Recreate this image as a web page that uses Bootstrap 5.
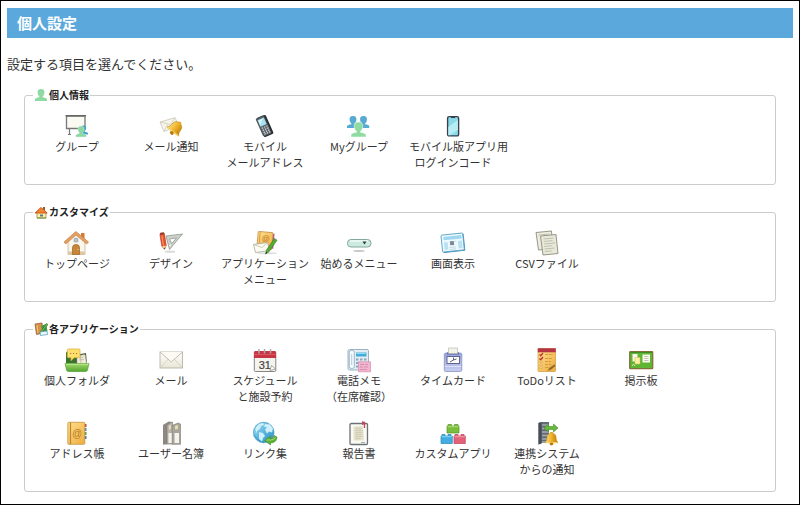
<!DOCTYPE html>
<html lang="ja">
<head>
<meta charset="utf-8">
<meta name="viewport" content="width=device-width, initial-scale=1">
<title>個人設定</title>
<link rel="stylesheet" href="https://cdn.jsdelivr.net/npm/bootstrap@5.3.0/dist/css/bootstrap.min.css">
<style>
body{font-family:"Noto Sans CJK JP","Noto Sans",sans-serif;color:#333;border:1px solid #000!important}
.page-title{background:#5ba9dc;font-size:15px;line-height:30px;padding:0 10px;margin:0 0 16px}
.page-pad{padding:7px 6px 12px}
.intro{font-size:13px;line-height:20px;margin:0 0 14px}
.group-box{border:1px solid #ccc;border-radius:3px;margin:0 17px 20px;padding:0 5px 14px}
.group-box legend{float:none;width:auto;font-size:10px;line-height:14px;font-weight:700;margin:0 0 12px 3px;padding:0 1px;gap:1px;color:#222}
.group-box legend svg{width:14px;height:14px}
.tile-list{row-gap:17px}
.tile{width:94px;min-height:56px;padding:0 3px;font-size:11px;line-height:16px;color:#333}
.tile:hover{text-decoration:underline!important}
.tile svg{width:24px;height:24px;overflow:visible}
</style>
<script src="https://cdn.jsdelivr.net/npm/bootstrap@5.3.0/dist/js/bootstrap.bundle.min.js"></script>
</head>
<body class="bg-white min-vh-100">
<svg width="0" height="0" class="position-absolute" aria-hidden="true">
<defs>
<linearGradient id="gold" x2="1"><stop stop-color="#ffe184"/><stop offset=".5" stop-color="#efb227"/><stop offset="1" stop-color="#b9780b"/></linearGradient>
<linearGradient id="green" x2="0" y2="1"><stop stop-color="#a5d86f"/><stop offset="1" stop-color="#52a52d"/></linearGradient>
<linearGradient id="sky" x2="1" y2="1"><stop stop-color="#9be0f6"/><stop offset="1" stop-color="#238cc4"/></linearGradient>
<linearGradient id="book" x2="1" y2="1"><stop stop-color="#ffe08e"/><stop offset="1" stop-color="#efac3d"/></linearGradient>
<linearGradient id="lilac" x2="0" y2="1"><stop stop-color="#97a4dc"/><stop offset="1" stop-color="#c6cdef"/></linearGradient>
<linearGradient id="paper" x2="0" y2="1"><stop stop-color="#fff"/><stop offset="1" stop-color="#e7e6d5"/></linearGradient>
<symbol id="bust" viewBox="0 0 12 12"><path d="M6 0C3.300 0 2.300 1.600 2.600 3.700c.1 1.800.8 3 1.800 3.700v.8C2.200 8.600.3 9 0 10.300V12h12v-1.700c-.3-1.300-2.200-1.700-4.400-2.100v-.8c1-.7 1.700-1.900 1.800-3.700C9.700 1.600 8.700 0 6 0z"/></symbol>
<symbol id="bell" viewBox="0 0 14 15"><path d="M7 0c1 0 1.400.7 1.400 1.400C11 2 12 4 12 7c0 2 .8 3 2 4.300H0C1.200 10 2 9 2 7c0-3 1-5 3.600-5.600C5.600.7 6 0 7 0z" fill="url(#gold)" stroke="#bd8514" stroke-width=".6"/><path d="M.6 11.500h12.800" stroke="#f7d671" stroke-width="1.500"/><ellipse cx="7" cy="13" rx="2" ry="1.600" fill="#b87b12"/></symbol>
<symbol id="house" viewBox="0 0 25 24"><path d="M17 2h3.500v7H17z" fill="#d17b38"/><path d="M4 10l8-8 9 8v13.500H4z" fill="#f9f6ec" stroke="#c8aa82" stroke-width=".7"/><path d="M4.400 20.500h16.200v3H4.400z" fill="#ddc69f"/><path d="M0 11L11.800.5 24.500 11l-1.800 2L12 4 1.800 13z" fill="#e6a05c" stroke="#c4834a" stroke-width=".7"/><circle cx="12" cy="9" r="2.600" fill="#8a98a5" stroke="#eee" stroke-width=".6"/><path d="M12 6.500v5M9.500 9h5" stroke="#fff" stroke-width=".5"/><path d="M8.500 23.500v-7q0-3 3.500-3t3.500 3v7z" fill="#c88638" stroke="#9c6427" stroke-width=".7"/><circle cx="14" cy="18.500" r=".6" fill="#ffe6a0"/></symbol>
</defs>
</svg>
<main class="page-pad">
<h1 class="page-title text-white fw-bold">個人設定</h1>
<p class="intro">設定する項目を選んでください。</p>

<fieldset class="group-box">
<legend class="d-flex align-items-center"><svg viewBox="0 0 14 14" fill="#8fdaa3" aria-hidden="true"><use href="#bust" x="1" y="1" width="12" height="12"/></svg>個人情報</legend>
<div class="tile-list d-flex flex-wrap">
<a href="#" class="tile d-flex flex-column align-items-center text-center text-nowrap text-decoration-none"><svg viewBox="0 0 24 24" aria-hidden="true"><path d="M1.500 2h18.500v12.500H1.500z" fill="#fafaf3" stroke="#777" stroke-width="1.300"/><path d="M.5 1.700H21" stroke="#666" stroke-width="1.300"/><path d="M4.500 15v5.500M3 20.500h3" stroke="#777" stroke-width="1.200"/><use href="#bust" x="14" y="11" width="9" height="10" fill="#429fca"/><use href="#bust" x="10.500" y="12" width="11" height="11" fill="#8bd7a1" stroke="#fff" stroke-width=".4"/></svg><span class="w-100">グループ</span></a>
<a href="#" class="tile d-flex flex-column align-items-center text-center text-nowrap text-decoration-none"><svg viewBox="0 0 24 24" aria-hidden="true"><path d="M1 8l15-4.300 4 8.500L5 17.500z" fill="#f7f5ea" stroke="#c9c7ba" stroke-width=".8"/><path d="M1 8l10.500 2.500L16 3.700M5 17.500l3.500-7M20 12.200l-7-2.500" fill="none" stroke="#d0cdbd" stroke-width=".8"/><use href="#bell" x="9" y="6" width="15" height="16" transform="rotate(38 16 14)"/></svg><span class="w-100">メール通知</span></a>
<a href="#" class="tile d-flex flex-column align-items-center text-center text-nowrap text-decoration-none"><svg viewBox="0 0 24 24" aria-hidden="true"><g transform="rotate(-24 11.500 12)"><rect x="7" y="2" width="10" height="20.500" rx="1.500" fill="#272b2e"/><rect x="6.500" y="2" width="8.800" height="19.500" rx="1.300" fill="#596066" stroke="#30363b" stroke-width=".6"/><rect x="7.500" y="4" width="6.800" height="7" fill="#a4e1f2"/><path d="M8 4.500h5l-5 5z" fill="#d8f4fa"/><path d="M8 13h1.500m1 0H12m1 0h1.500M8 15.300h1.500m1 0H12m1 0h1.500M8 17.500h1.500m1 0H12m1 0h1.500M8 19.500h1.500m1 0H12m1 0h1.500" stroke="#d8dde0" stroke-width="1.200"/></g></svg><span class="w-100">モバイル<br>メールアドレス</span></a>
<a href="#" class="tile d-flex flex-column align-items-center text-center text-nowrap text-decoration-none"><svg viewBox="0 0 24 24" aria-hidden="true"><g fill="#57abd2"><use href="#bust" x="0" y="2" width="12" height="12"/><use href="#bust" x="10.500" y="2" width="12" height="12"/></g><use href="#bust" x="4" y="8" width="15" height="15" fill="#8fdba2" stroke="#fff" stroke-width=".4"/></svg><span class="w-100">Myグループ</span></a>
<a href="#" class="tile d-flex flex-column align-items-center text-center text-nowrap text-decoration-none"><svg viewBox="0 0 24 24" aria-hidden="true"><rect x="6.600" y="2.600" width="11" height="19.300" rx="1.500" fill="#8bdaea" stroke="#39424c" stroke-width="1.400"/><path d="M7.300 13l9.600-7v10L9 21.200H7.300z" fill="#b7ecf4"/><path d="M10 3.300h4.200" stroke="#39424c" stroke-width="1.500"/></svg><span class="w-100">モバイル版アプリ用<br>ログインコード</span></a>
</div>
</fieldset>

<fieldset class="group-box">
<legend class="d-flex align-items-center"><svg viewBox="0 0 14 14" aria-hidden="true"><path d="M9 2h2v3H9z" fill="#9c592b"/><path d="M3 7h9v6H3z" fill="#fff0a5" stroke="#98743e" stroke-width=".7"/><path d="M1 8L7 2.500 13.200 8z" fill="#f38432" stroke="#c65b1b" stroke-width="1"/><path d="M6 9.500h3v2H6z" fill="#5b7994"/><path d="M3 13h9" stroke="#679b3d"/></svg>カスタマイズ</legend>
<div class="tile-list d-flex flex-wrap">
<a href="#" class="tile d-flex flex-column align-items-center text-center text-nowrap text-decoration-none"><svg viewBox="0 0 24 24" aria-hidden="true"><use href="#house" x="-1" y="0" width="25" height="24"/></svg><span class="w-100">トップページ</span></a>
<a href="#" class="tile d-flex flex-column align-items-center text-center text-nowrap text-decoration-none"><svg viewBox="0 0 24 24" aria-hidden="true"><ellipse cx="11" cy="20.700" rx="5.500" ry="1.200" fill="#ddd"/><path fill-rule="evenodd" d="M7 5l16.500-2L10.500 18.500zM10.500 8l2.200 4.500L17.500 7z" fill="#ccd2ca" stroke="#8f9892" stroke-width=".8"/><circle cx="11" cy="14.500" r=".8" fill="#fff"/><g transform="rotate(-9 4 10)"><path d="M2 3h4.500v12l-2.200 3.500L2 15z" fill="#e7522c" stroke="#ad3820" stroke-width=".6"/><path d="M3.700 4.500v10" stroke="#ff9b72"/><path d="M2 15h4.500l-2.200 3.500z" fill="#f5cf9b"/><path d="M3.600 17l.7 1.500.8-1.500z" fill="#333"/><rect x="2" y="1.500" width="4.500" height="2" rx=".8" fill="#943b29"/></g></svg><span class="w-100">デザイン</span></a>
<a href="#" class="tile d-flex flex-column align-items-center text-center text-nowrap text-decoration-none"><svg viewBox="0 0 24 24" aria-hidden="true"><ellipse cx="14" cy="22.300" rx="10" ry="1" fill="#ddd"/><g transform="rotate(5 12 9)"><path d="M19 2h2v15h-2z" fill="#b6589b"/><rect x="4.500" y="1" width="15" height="17" rx="1" fill="url(#book)" stroke="#bc853b" stroke-width=".7"/><path d="M6.500 1v17" stroke="#d79a44"/><text x="8.500" y="10" font-size="8" font-family="Liberation Sans, sans-serif" fill="#bd7c2a">@</text></g><path d="M.5 13.500l14-2 2 8-14 2z" fill="#fffdf1" stroke="#aaa797" stroke-width=".8"/><path d="M.5 13.500l8.500 3 5.500-5" fill="none" stroke="#c2bfad" stroke-width=".8"/><path d="M12.500 23l1-4 8-11.500 2.500 1.700-8 11.500z" fill="#57ac32" stroke="#2e762a" stroke-width=".6"/><path d="M12.500 23l.8-2 1 .8z" fill="#222"/></svg><span class="w-100">アプリケーション<br>メニュー</span></a>
<a href="#" class="tile d-flex flex-column align-items-center text-center text-nowrap text-decoration-none"><svg viewBox="0 0 24 24" aria-hidden="true"><ellipse cx="12" cy="20" rx="6" ry="1" fill="#c7c9c8"/><rect x=".5" y="8.500" width="23.500" height="7.500" rx="3.500" fill="#cceadf" stroke="#82a99b"/><path d="M3.500 10h17" stroke="#effaf6" stroke-width="1.500" stroke-linecap="round"/><path d="M15.500 10.500h4L17.500 13.500z" fill="#263d35"/></svg><span class="w-100">始めるメニュー</span></a>
<a href="#" class="tile d-flex flex-column align-items-center text-center text-nowrap text-decoration-none"><svg viewBox="0 0 24 24" aria-hidden="true"><g transform="rotate(-6 12 12)"><rect x="1.500" y="3.500" width="22" height="17.500" rx="1" fill="#3e91bd"/><rect x=".8" y="3" width="21.800" height="17" rx="1" fill="#eef9fd" stroke="#5ba4c8" stroke-width=".9"/><path d="M3 5h18v3.300H3z" fill="#9fd7f0"/><path d="M3 10.500h3.700v7.500H3zM17 10.500h4v7.500h-4z" fill="#b9e1f2"/><path d="M9 10h4v4H9z" fill="#79899a"/><path d="M8 16h6.500M8 18h6.500M14 10.500h1.500" stroke="#c1d8e2"/></g></svg><span class="w-100">画面表示</span></a>
<a href="#" class="tile d-flex flex-column align-items-center text-center text-nowrap text-decoration-none"><svg viewBox="0 0 24 24" aria-hidden="true"><g stroke="#8b8c7e" stroke-width=".9"><path d="M1 1.500L16.500 0l1.500 17.500L3.500 19z" fill="#ededdf"/><path d="M5.500 5L21 3.500l2 19L8 24z" fill="#e9e9da"/></g><path d="M8.500 8l10-1M8.700 10.500l9-.9M9 13l11-1.100M9.200 15.500l8-.8M9.500 18l10-1M9.700 20.500l7-.7M3.500 4l11-1" stroke="#bfc1ae"/></svg><span class="w-100">CSVファイル</span></a>
</div>
</fieldset>

<fieldset class="group-box mb-0">
<legend class="d-flex align-items-center"><svg viewBox="0 0 14 14" aria-hidden="true"><path d="M1 2l7-1 1 10-6.500 1.500z" fill="#d79049" stroke="#895423" stroke-width=".7"/><path d="M3 3l1 8" stroke="#f5c476"/><path d="M7 4l5-2 1.500 7-4 2z" fill="#42984b"/><path d="M12.500 1.500l1.500 1-6 8-2 1 .5-2z" fill="#67bd43" stroke="#286d31" stroke-width=".6"/><path d="M6 10l7-1 .5 3.500-7 1z" fill="#eefaff" stroke="#469ab5" stroke-width=".7"/></svg>各アプリケーション</legend>
<div class="tile-list d-flex flex-wrap">
<a href="#" class="tile d-flex flex-column align-items-center text-center text-nowrap text-decoration-none"><svg viewBox="0 0 24 24" aria-hidden="true"><path d="M1 5q0-1.500 1.500-1.500H11V16H1z" fill="#38762d"/><path d="M10 7l11-2 1 11H10z" fill="#435c38"/><path d="M12 8l8-1.500 1.500 9H12z" fill="#f0eddb" stroke="#aaa68f" stroke-width=".6"/><path d="M14 10l4.500-.7M14 12l5-.5M15.500 7l.5 9" stroke="#b5b196" stroke-width=".7"/><path d="M0 15.500h24L22.500 22q-.3 1.500-2 1.500h-17Q1.800 23.500 1.500 22z" fill="url(#green)" stroke="#479b2a" stroke-width=".6"/><path d="M.8 16.200h22.400" stroke="#c0eb92"/><path d="M3.500 1h10.300q1.200 0 1.200 1.200v6.300q0 1.200-1.200 1.200H9l-3 3V9.700H3.500q-1.200 0-1.200-1.200V2.200Q2.300 1 3.500 1z" fill="#ffdf6e" stroke="#dca633" stroke-width=".7"/><path d="M5 5.500h1.200m1.800 0h1.200m1.800 0h1.200" stroke="#a87a23" stroke-width="1.200"/></svg><span class="w-100">個人フォルダ</span></a>
<a href="#" class="tile d-flex flex-column align-items-center text-center text-nowrap text-decoration-none"><svg viewBox="0 0 24 24" aria-hidden="true"><rect x="1" y="4" width="22.500" height="16" fill="url(#paper)" stroke="#b7b3a4" stroke-width=".9"/><path d="M1 20l8.500-9M23.500 20L15 11" stroke="#cfccbc" stroke-width=".8"/><path d="M1 4l11.300 10L23.500 4" fill="#fbfaf4" stroke="#b9b5a5" stroke-width=".9"/></svg><span class="w-100">メール</span></a>
<a href="#" class="tile d-flex flex-column align-items-center text-center text-nowrap text-decoration-none"><svg viewBox="0 0 24 24" aria-hidden="true"><rect x="1.300" y="3.500" width="21.500" height="20" rx="1.200" fill="#f4f3ed" stroke="#7c7775" stroke-width=".9"/><path d="M1 10V4.500Q1 3 2.500 3h19Q23 3 23 4.500V10z" fill="#c83645"/><path d="M1 6.500h22" stroke="#d95661"/><path d="M6 1v4.500M11.500 1v4.500M17.500 1v4.500" stroke="#aaa" stroke-width="1.500"/><text x="5.700" y="20.500" font-size="11" font-family="Liberation Sans, sans-serif" fill="#444" stroke="#444" stroke-width=".2">31</text><path d="M17 22.500l1.500-5 4 3.500z" fill="#fff" stroke="#88857b" stroke-width=".7"/></svg><span class="w-100">スケジュール<br>と施設予約</span></a>
<a href="#" class="tile d-flex flex-column align-items-center text-center text-nowrap text-decoration-none"><svg viewBox="0 0 24 24" aria-hidden="true"><rect x="1" y="1.500" width="20.500" height="20.500" rx="1.500" fill="#e3edf3" stroke="#91aabd" stroke-width=".9"/><rect x="2.300" y="2.500" width="5" height="18" rx="2" fill="#f7fbfd" stroke="#92b1c5" stroke-width=".9"/><path d="M4.700 6v11" stroke="#b4cbd9"/><path d="M9 4.500h10.500v4H9z" fill="#42acd8"/><path d="M9.500 5.500h9" stroke="#9bddf3"/><g fill="#89a8ba"><path d="M9 10.500h2.500v2H9zM13 10.500h2.500v2H13zM17 10.500h2.500v2H17zM9 14h2.500v2H9zM13 14h2.500v2H13zM17 14h2.500v2H17zM9 17.500h2.500v2H9z"/></g><path d="M11.500 13.800h12v10h-12z" fill="#f0b5cf" stroke="#d88bad" stroke-width=".7"/><path d="M13 16.500h4m1 0h3M13 19h3m1 0h4M13 21.500h7" stroke="#d583a8" stroke-width=".8"/></svg><span class="w-100">電話メモ<br>（在席確認）</span></a>
<a href="#" class="tile d-flex flex-column align-items-center text-center text-nowrap text-decoration-none"><svg viewBox="0 0 24 24" aria-hidden="true"><rect x="3.300" y="5" width="17.500" height="18.500" rx="1.500" fill="url(#lilac)" stroke="#8994c4" stroke-width=".8"/><path d="M4 18.500h16" stroke="#dde2fa"/><path d="M6 4.500h12v2H6z" fill="#5b679c"/><path d="M7.500 0h9v5.500h-9z" fill="#f4f3e8" stroke="#b9b9b1" stroke-width=".7"/><rect x="6" y="8.500" width="12.500" height="7" fill="#fff" stroke="#5e668d" stroke-width="1"/><path d="M9 14l3.500-2V9.500m0 2.500l3-1" fill="none" stroke="#595f77"/></svg><span class="w-100">タイムカード</span></a>
<a href="#" class="tile d-flex flex-column align-items-center text-center text-nowrap text-decoration-none"><svg viewBox="0 0 24 24" aria-hidden="true"><rect x="3" y=".5" width="17.500" height="23" rx=".7" fill="url(#book)" stroke="#cf993d" stroke-width=".7"/><path d="M2.800.3h18v4h-18z" fill="#b63343"/><path d="M4.500 6.500l1.200 1.200L8 5M4.500 10.500l1.200 1.200L8 9" fill="none" stroke="#be303b" stroke-width="1.300"/><path d="M10 6.500h8M10 10.500h7M10 13.500h6M10 16.500h6M10 19.500h4" stroke="#cc9543" stroke-width=".9" stroke-dasharray="3 .7"/><path d="M5 13h2v1.500H5zM5 16h2v1.500H5zM5 19h2v1.500H5z" fill="#fff0be" stroke="#cc9543" stroke-width=".5"/><path d="M12 23l2.500-3.500 5-3.500.7 2-4 4z" fill="#b88635"/><path d="M14 21.500l6-4" stroke="#6b562d"/></svg><span class="w-100">ToDoリスト</span></a>
<a href="#" class="tile d-flex flex-column align-items-center text-center text-nowrap text-decoration-none"><svg viewBox="0 0 24 24" aria-hidden="true"><rect x=".7" y="3.700" width="23" height="17" rx=".8" fill="#60b632" stroke="#84713a" stroke-width="1.300"/><path d="M1.500 4.500h21.400" stroke="#3e8c24"/><path d="M3.500 6h5v7.500h-5z" fill="#f7f6e9"/><path d="M6 9.500h5V16H6z" fill="#fff0a2" stroke="#d4bb59" stroke-width=".5"/><path d="M13.500 6.500H21v8h-7.500z" fill="#fbfbef"/><path d="M15 8.500h4.500M15 10.500h4.500M15 12.500h4.500" stroke="#acb09c" stroke-width=".7"/><path d="M3 18l1.500-2L6 18" fill="none" stroke="#e0f6c9" stroke-width=".8"/></svg><span class="w-100">掲示板</span></a>
<a href="#" class="tile d-flex flex-column align-items-center text-center text-nowrap text-decoration-none"><svg viewBox="0 0 24 24" aria-hidden="true"><path d="M19 3h2.500v3H19z" fill="#c84148"/><path d="M19 7h2.500v3H19z" fill="#4388c3"/><path d="M19 11h2.500v3H19z" fill="#4aa54a"/><path d="M19 15h2.500v3H19z" fill="#3a78b6"/><rect x="2.800" y="1.300" width="17" height="22" rx="1" fill="url(#book)" stroke="#c5933d" stroke-width=".8"/><path d="M5.500 1.500v21.700" stroke="#bd842d" stroke-width="1.200"/><text x="7" y="15.500" font-size="10" font-family="Liberation Sans, sans-serif" fill="#b57d25">@</text></svg><span class="w-100">アドレス帳</span></a>
<a href="#" class="tile d-flex flex-column align-items-center text-center text-nowrap text-decoration-none"><svg viewBox="0 0 24 24" aria-hidden="true"><path d="M4 4l6-3.500V22l-6 1.500z" fill="#aaa79f"/><path d="M4 4l6-3.500 3 .5-5 3.500v19H4z" fill="#8d8982"/><path d="M8 4l5.500-3v22H8z" fill="#b9b5ac" stroke="#7c7971" stroke-width=".6"/><path d="M13 4.500L19 2l2.500 1v20.300H13z" fill="#a8a49c" stroke="#7c7971" stroke-width=".6"/><path d="M9.500 12h3.200v10H9.500zM15.500 12H20v10h-4.500z" fill="#f4f3ed"/><path d="M10 5l2-1v4l-2 .5zM16 5l3-1v4l-3 .5z" fill="#e3dfae"/></svg><span class="w-100">ユーザー名簿</span></a>
<a href="#" class="tile d-flex flex-column align-items-center text-center text-nowrap text-decoration-none"><svg viewBox="0 0 24 24" aria-hidden="true"><circle cx="10.700" cy="11.500" r="10.300" fill="url(#sky)" stroke="#278cbb" stroke-width=".6"/><path d="M2.500 7L6 3l4-1 1 2-3 1-1 3-3 2-1 3zM12 3l5 .5 3 4-1 4-3-1-2 2-2-4 2-2-3-1zM6 11l4 1 2 3-2 2-1 4-3-3z" fill="#cfeffa"/><path d="M1 14q4 6 10 7.500" fill="none" stroke="#1d78ac" opacity=".5"/><path d="M11.500 19.500l6-4.500v2.700q3 .4 3.500-3.200l3 1.500q0 5.500-6.500 6v2z" fill="#5cb135" stroke="#40892b" stroke-width=".6"/><path d="M13.500 19h4q3.500 0 5-2.500" fill="none" stroke="#a3dd75"/></svg><span class="w-100">リンク集</span></a>
<a href="#" class="tile d-flex flex-column align-items-center text-center text-nowrap text-decoration-none"><svg viewBox="0 0 24 24" aria-hidden="true"><rect x="3" y="2.500" width="17.500" height="21" rx="1.200" fill="#fafaf3" stroke="#6a7179" stroke-width="1.300"/><path d="M6.500 5.500L16 5l1 14.500H6.500z" fill="#e5e2ce"/><path d="M8 7.500h7M8 9.500h8M8 11.500h8M8 13.500h8M8 15.500h8M8 17.500h5M10 6v13M13 6v13" stroke="#c9c6ad" stroke-width=".6"/><path d="M14 21.500h4" stroke="#a9ad9e"/><path d="M15 1l2.500.5V7M15.700 1v3" fill="none" stroke="#cb4251" stroke-width="1.300"/></svg><span class="w-100">報告書</span></a>
<a href="#" class="tile d-flex flex-column align-items-center text-center text-nowrap text-decoration-none"><svg viewBox="0 0 24 24" aria-hidden="true"><path d="M6 5h1V3.500h3.500V5h3V3.500H17V5h1v7H6z" fill="#7bbd3d" stroke="#559829" stroke-width=".7"/><path d="M6.500 5.700h11" stroke="#b3dc7f"/><path d="M0 15h1v-1.500h3V15h3v-1.500h3V15h1.300v7.500H0z" fill="#42ade0" stroke="#2588ba" stroke-width=".7"/><path d="M.5 15.700h10.300" stroke="#8cd5f3"/><path d="M13 15h1v-1.500h3V15h3v-1.500h3V15h1.300v7.500H13z" fill="#e3617a" stroke="#bd405a" stroke-width=".7"/><path d="M13.500 15.700h10.300" stroke="#f3a1ad"/></svg><span class="w-100">カスタムアプリ</span></a>
<a href="#" class="tile d-flex flex-column align-items-center text-center text-nowrap text-decoration-none"><svg viewBox="0 0 24 24" aria-hidden="true"><path d="M3.500 2l3-1H14v21H7l-3.500 1.500z" fill="#646c76"/><path d="M3.500 2l3-1v21.500l-3 1z" fill="#464d56"/><path d="M7 4h7M7 7.500h7M7 11h7M7 14.500h7M7 18h7M7 21h7" stroke="#a5abb1" stroke-width="1.300"/><path d="M9 7l4.500-4v2.500h5V3L23 7l-4.500 4V8.500h-5V11z" fill="#68b93b" stroke="#438d2c" stroke-width=".6"/><use href="#bell" x="10" y="11" width="13" height="14"/></svg><span class="w-100">連携システム<br>からの通知</span></a>
</div>
</fieldset>
</main>
</body>
</html>
